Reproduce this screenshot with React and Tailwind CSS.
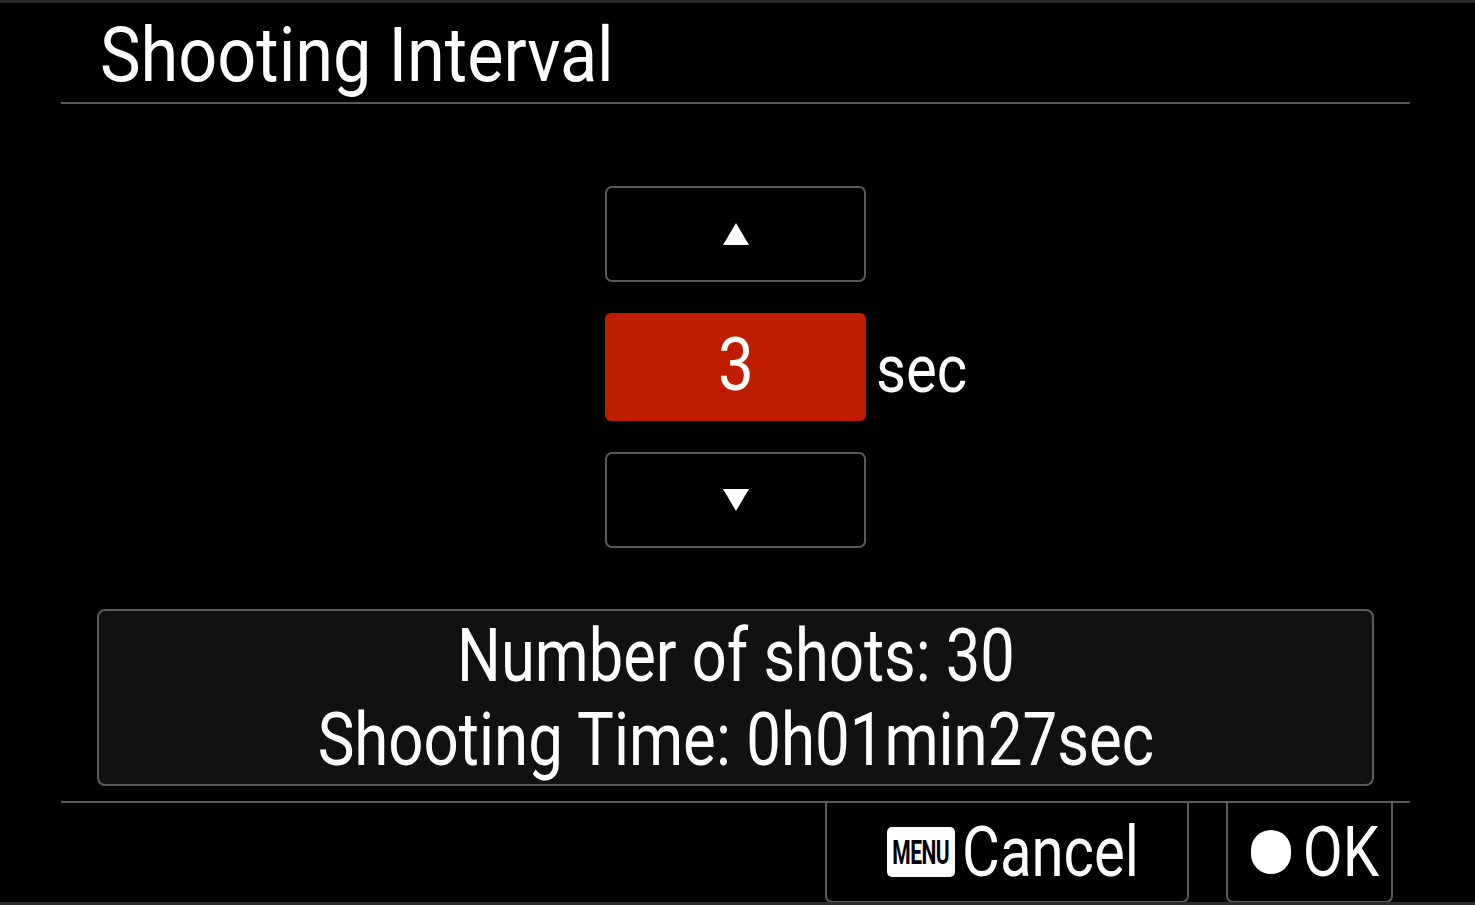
import React from "react";

const font = { fontFamily: "Roboto, 'Liberation Sans', sans-serif" };

function StepButton({ dir }) {
  return (
    <div className="w-[261px] h-[96px] rounded-[7px] border-2 border-[#5a5a5a] bg-black flex items-center justify-center">
      <svg width="28" height="24" viewBox="0 0 28 24">
        {dir === "up" ? (
          <polygon points="14,1 27,23 1,23" fill="#fff" />
        ) : (
          <polygon points="1,1 27,1 14,23" fill="#fff" />
        )}
      </svg>
    </div>
  );
}

export default function App() {
  return (
    <div
      className="w-[1475px] h-[905px] bg-black text-white border-t-[3px] border-b-[3px] border-[#2a2a2a] flex flex-col overflow-hidden"
      style={font}
    >
      <div className="ml-[61px] w-[1349px] flex flex-col">
        {/* header */}
        <div className="h-[99px] flex items-center pt-[4px] pl-[39px]">
          <span className="inline-block origin-left scale-x-[0.9] text-[76px] leading-none">Shooting Interval</span>
        </div>
        <div className="h-[2px] bg-[#5a5a5a]" />

        {/* value selector */}
        <div className="mt-[82px] flex flex-col items-center gap-[31px]">
          <StepButton dir="up" />
          <div className="relative w-[261px] h-[108px] rounded-[6px] bg-[#c01d00] flex items-center justify-center">
            <span className="inline-block scale-x-[0.86] text-[74px] leading-none -mt-[4px]">3</span>
            <div className="absolute left-full top-0 h-full flex items-center pl-[10px]">
              <span className="inline-block origin-left scale-x-[0.88] text-[66px] leading-none pt-[6px]">sec</span>
            </div>
          </div>
          <StepButton dir="down" />
        </div>

        {/* info */}
        <div className="mt-[61px] mx-[36px] h-[177px] rounded-[8px] border-2 border-[#5a5a5a] bg-[#111111] flex flex-col items-center justify-center">
          <div className="h-[84px] flex items-center">
            <span className="inline-block scale-x-[0.83] text-[74px] leading-none">Number of shots: 30</span>
          </div>
          <div className="h-[84px] flex items-center">
            <span className="inline-block scale-x-[0.835] text-[74px] leading-none">Shooting Time: 0h01min27sec</span>
          </div>
        </div>

        <div className="mt-[15px] h-[2px] bg-[#5a5a5a]" />

        {/* footer buttons */}
        <div className="flex justify-end gap-[37px] pr-[17px]">
          <div className="w-[364px] h-[100px] rounded-b-[7px] border-2 border-t-0 border-[#5a5a5a] flex items-center justify-center pl-[30px]">
            <div className="w-[68px] h-[50px] rounded-[5px] bg-white flex items-center justify-center">
              <span className="inline-block scale-x-[0.62] text-black font-bold text-[34px] leading-none tracking-[-1px]">
                MENU
              </span>
            </div>
            <span className="inline-block -ml-[11px] scale-x-[0.83] text-[70px] leading-none">Cancel</span>
          </div>
          <div className="w-[167px] h-[100px] rounded-b-[7px] border-2 border-t-0 border-[#5a5a5a] flex items-center justify-center pl-[19px]">
            <div className="w-[40px] h-[44px] rounded-full bg-white" />
            <span className="inline-block ml-[4px] scale-x-[0.83] text-[70px] leading-none">OK</span>
          </div>
        </div>
      </div>
    </div>
  );
}
